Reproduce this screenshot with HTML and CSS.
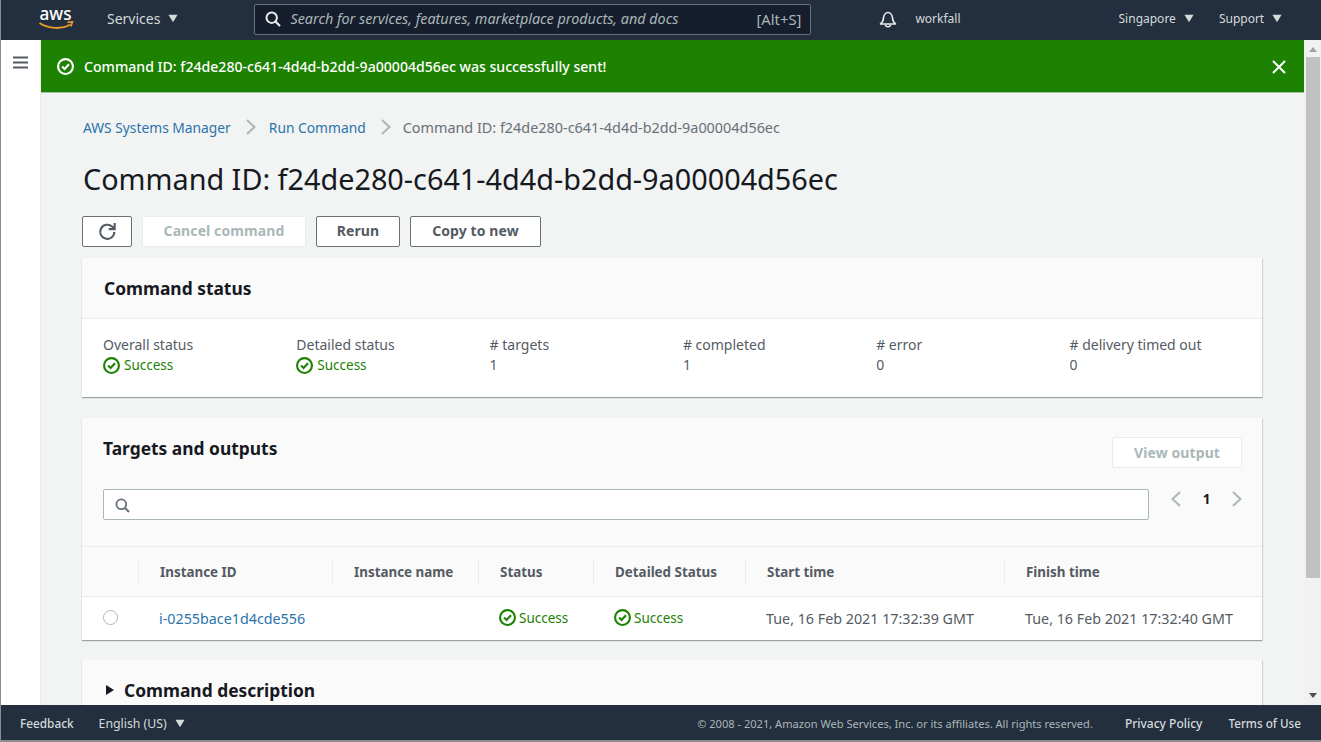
FILE: index.html
```html
<!DOCTYPE html>
<html lang="en">
<head>
<meta charset="utf-8">
<title>Command ID</title>
<link rel="stylesheet" href="styles.css">
</head>
<body>
<svg class="defs" width="0" height="0" aria-hidden="true">
  <defs>
    <symbol id="ok" viewBox="0 0 16 16"><circle cx="8" cy="8" r="7" fill="none" stroke="currentColor" stroke-width="2"/><path d="M4.8 8.1l2.3 2.3 4.2-4.6" fill="none" stroke="currentColor" stroke-width="2"/></symbol>
    <symbol id="caret" viewBox="0 0 12 10"><path d="M0.5 0.5h11L6 9.500z" fill="currentColor"/></symbol>
  </defs>
</svg>
<header class="top">
  <svg class="logo" viewBox="0 -9 37 37" width="37" height="37"><path d="M1.500 14c9 6 22 6.500 31 1.500" fill="none" stroke="#ec9b29" stroke-width="2"/><path d="M29.500 13.300l5-.4-1.600 4.600" fill="none" stroke="#ec9b29" stroke-width="1.600"/><text x="1.500" y="11" class="logo-text" textLength="32" lengthAdjust="spacingAndGlyphs">aws</text></svg>
  <span class="nav services">Services <svg class="caret"><use href="#caret"/></svg></span>
  <div class="search">
    <svg class="search-ico" viewBox="0 0 16 16" width="16" height="16"><circle cx="6.700" cy="6.700" r="5.200" fill="none" stroke="currentColor" stroke-width="2"/><path d="M10.500 10.500l4.500 4.500" stroke="currentColor" stroke-width="2.200"/></svg>
    <span class="search-ph">Search for services, features, marketplace products, and docs</span>
    <span class="search-key">[Alt+S]</span>
  </div>
  <svg class="bell" viewBox="0 0 18 18" width="18" height="18"><path d="M1.500 14h15c-2-1.500-2.800-3-3-6-.2-3-2-5.500-4.500-5.500S4.700 5 4.500 8c-.2 3-1 4.500-3 6z" fill="none" stroke="currentColor" stroke-width="1.600" stroke-linejoin="round"/><path d="M6.500 14.500c0 3 5 3 5 0" fill="none" stroke="currentColor" stroke-width="1.500"/></svg>
  <span class="nav user">workfall</span>
  <span class="nav region">Singapore <svg class="caret"><use href="#caret"/></svg></span>
  <span class="nav support">Support <svg class="caret"><use href="#caret"/></svg></span>
</header>
<div class="middle">
  <aside class="side">
    <svg viewBox="0 0 15 13" width="15" height="13"><path d="M0 1.500h15M0 6.500h15M0 11.500h15" stroke="#545b64" stroke-width="2"/></svg>
  </aside>
  <div class="content">
    <div class="flash">
      <svg class="flash-ok"><use href="#ok"/></svg>
      <span class="flash-text">Command ID: f24de280-c641-4d4d-b2dd-9a00004d56ec was successfully sent!</span>
      <svg class="flash-x" viewBox="0 0 14 14" width="14" height="14"><path d="M1 1l12 12M13 1L1 13" stroke="#fff" stroke-width="2"/></svg>
    </div>
    <main class="main">
      <nav class="crumbs">
        <a class="link">AWS Systems Manager</a>
        <svg class="chev" viewBox="0 0 10 16" width="10" height="16"><path d="M1 1l7.500 7L1 15" fill="none" stroke="#aab7b8" stroke-width="2"/></svg>
        <a class="link">Run Command</a>
        <svg class="chev chev-last" viewBox="0 0 10 16" width="10" height="16"><path d="M1 1l7.500 7L1 15" fill="none" stroke="#aab7b8" stroke-width="2"/></svg>
        <span class="crumb-cur">Command ID: f24de280-c641-4d4d-b2dd-9a00004d56ec</span>
      </nav>
      <h1 class="title">Command ID: f24de280-c641-4d4d-b2dd-9a00004d56ec</h1>
      <div class="actions">
        <button class="btn btn-ico"><svg viewBox="0 0 18 18" width="19" height="19"><path d="M15.500 9.500a6.700 6.700 0 1 1-2.200-5.200L15.500 6.300" fill="none" stroke="#545b64" stroke-width="2"/><path d="M15.800 1v5.800h-5.600" fill="none" stroke="#545b64" stroke-width="2"/></svg></button>
        <button class="btn btn-off btn-cancel">Cancel command</button>
        <button class="btn btn-rerun">Rerun</button>
        <button class="btn btn-copy">Copy to new</button>
      </div>
      <section class="card status-card">
        <div class="card-head"><h2>Command status</h2></div>
        <div class="stats">
          <div><div class="stat-k">Overall status</div><div class="ok"><svg class="ok-ico"><use href="#ok"/></svg>Success</div></div>
          <div><div class="stat-k">Detailed status</div><div class="ok"><svg class="ok-ico"><use href="#ok"/></svg>Success</div></div>
          <div><div class="stat-k"># targets</div><div class="stat-v">1</div></div>
          <div><div class="stat-k"># completed</div><div class="stat-v">1</div></div>
          <div><div class="stat-k"># error</div><div class="stat-v">0</div></div>
          <div><div class="stat-k"># delivery timed out</div><div class="stat-v">0</div></div>
        </div>
      </section>
      <section class="card targets-card">
        <div class="targets-head">
          <div class="targets-top">
            <h2>Targets and outputs</h2>
            <button class="btn btn-off btn-view">View output</button>
          </div>
          <div class="filter">
            <div class="filter-box"><svg viewBox="0 0 16 16" width="15" height="15"><circle cx="6.700" cy="6.700" r="5.200" fill="none" stroke="#687078" stroke-width="2"/><path d="M10.500 10.500l4.500 4.500" stroke="#687078" stroke-width="2.200"/></svg></div>
            <div class="pager">
              <svg viewBox="0 0 10 16" width="10" height="16"><path d="M9 1L1.500 8 9 15" fill="none" stroke="#aab7b8" stroke-width="2"/></svg>
              <span class="page-no">1</span>
              <svg viewBox="0 0 10 16" width="10" height="16"><path d="M1 1l7.500 7L1 15" fill="none" stroke="#aab7b8" stroke-width="2"/></svg>
            </div>
          </div>
        </div>
        <div class="thead">
          <div class="th"></div>
          <div class="th">Instance ID</div>
          <div class="th">Instance name</div>
          <div class="th">Status</div>
          <div class="th">Detailed Status</div>
          <div class="th">Start time</div>
          <div class="th">Finish time</div>
        </div>
        <div class="trow">
          <div class="td td-radio"><span class="radio"></span></div>
          <div class="td"><a class="link">i-0255bace1d4cde556</a></div>
          <div class="td"></div>
          <div class="td td-ok"><span class="ok"><svg class="ok-ico"><use href="#ok"/></svg>Success</span></div>
          <div class="td td-ok"><span class="ok"><svg class="ok-ico"><use href="#ok"/></svg>Success</span></div>
          <div class="td">Tue, 16 Feb 2021 17:32:39 GMT</div>
          <div class="td">Tue, 16 Feb 2021 17:32:40 GMT</div>
        </div>
      </section>
      <section class="card desc-card">
        <h2 class="desc-title"><svg class="desc-caret" viewBox="0 0 10 12" width="10" height="12"><path d="M1 1l8 5-8 5z" fill="#16191f"/></svg>Command description</h2>
      </section>
    </main>
  </div>
  <div class="scrollbar">
    <svg class="sb-arrow" viewBox="0 0 8 5" width="8" height="5"><path d="M0 5l4-5 4 5z" fill="#a3a3a3"/></svg>
    <div class="sb-track"><div class="sb-thumb"></div></div>
    <svg class="sb-arrow" viewBox="0 0 8 5" width="8" height="5"><path d="M0 0l4 5 4-5z" fill="#505050"/></svg>
  </div>
</div>
<footer class="foot">
  <span class="foot-a">Feedback</span>
  <span class="foot-lang">English (US) <svg class="caret"><use href="#caret"/></svg></span>
  <span class="foot-copy">© 2008 - 2021, Amazon Web Services, Inc. or its affiliates. All rights reserved.</span>
  <span class="foot-a foot-pp">Privacy Policy</span>
  <span class="foot-a foot-tu">Terms of Use</span>
</footer>
</body>
</html>
```
FILE: styles.css
```css
* { box-sizing: border-box; }
html, body { margin: 0; height: 100%; overflow: hidden; }
body {
  width: 1321px; height: 742px;
  display: flex; flex-direction: column;
  font-family: "Noto Sans", "Open Sans", sans-serif;
  font-size: 14px; color: #16191f;
  background: #fff;
  border-left: 1px solid #8d8d8d;
  border-bottom: 2px solid #8d8d8d;
}
.defs { position: absolute; }
h1, h2 { margin: 0; }

.top {
  height: 40px; flex: none; margin-left: -1px;
  background: #232f3e; color: #d5dbdb;
  display: flex; align-items: center;
  border-left: 1px solid #8d8d8d;
  padding-bottom: 3px;
  font-size: 13px;
}
.logo { margin-left: 37px; flex: none; }
.logo-text { font: 500 18.500px "Noto Sans", sans-serif; fill: #fff; }
.nav { display: inline-flex; align-items: center; gap: 8px; white-space: nowrap; }
.caret { width: 10px; height: 9px; }
.services { margin-left: 32px; font-size: 14px; }
.search {
  margin: 2px 0 0 76px; width: 557px; height: 31px;
  background: #161e2d; border: 1px solid #687078; border-radius: 2px;
  display: flex; align-items: center; padding: 0 9px 2px 10px;
}
.search-ico { color: #eaeded; flex: none; }
.search-ph { margin-left: 9px; font-style: italic; color: #aab7b8; font-size: 14.350px; flex: 1; white-space: nowrap; }
.search-key { color: #aab7b8; font-size: 14.800px; }
.bell { margin-left: 68px; color: #eaeded; flex: none; }
.user { margin-left: 18px; font-size: 12px; }
.region { margin-left: 158px; font-size: 12px; }
.support { margin-left: 25px; font-size: 12px; }

.middle { flex: 1; min-height: 0; display: flex; }
.side { width: 40px; flex: none; padding: 14px 0 0 12px; border-right: 1px solid #eaeded; background: #fff; }
.content { flex: 1; min-width: 0; display: flex; flex-direction: column; background: #f2f3f3; border-top: 1px solid #1d8102; }

.flash {
  height: 52px; flex: none; background: #1d8102; color: #fff;
  display: flex; align-items: center; padding: 0 18px 0 16px;
  border-bottom: 1px solid #a9c2a3;
  font-size: 14.100px; font-weight: 500;
}
.flash-ok { width: 17px; height: 17px; flex: none; }
.flash-text { margin-left: 10px; flex: 1; }
.flash-x { flex: none; }

.main { flex: 1; min-height: 0; overflow: hidden; padding: 0 42px 0 41px; }
.link { color: #2a73ab; }
.crumbs { display: flex; align-items: center; height: 20px; margin: 24px 0 0 1px; font-size: 13.800px; white-space: nowrap; }
.chev { margin: 0 13px 0 15px; flex: none; }
.chev-last { margin-right: 12px; }
.crumb-cur { color: #687078; font-size: 14.400px; }
.title { font-size: 28.800px; font-weight: 400; line-height: 40px; margin: 22px 0 0 1px; white-space: nowrap; }

.actions { display: flex; gap: 10px; margin-top: 17px; }
.btn {
  height: 31px; padding: 0 0 2px; font: 700 14px "Noto Sans", sans-serif; letter-spacing: .1px;
  background: #fff; color: #545b64; border: 1px solid #687078; border-radius: 2px;
  display: flex; align-items: center; justify-content: center;
}
.btn-off { color: #aab7b8; border-color: #eaeded; }
.btn-ico { width: 50px; padding: 0 0 1px; }
.btn-cancel { width: 164px; }
.btn-rerun { width: 84px; }
.btn-copy { width: 131px; }

.card { background: #fff; box-shadow: 0 1px 1px 0 rgba(0,28,36,.3), 1px 1px 1px 0 rgba(0,28,36,.1); }
.card h2 { font-size: 17.400px; font-weight: 700; line-height: 24px; }
.status-card { margin-top: 11px; height: 139px; }
.card-head { height: 61px; background: #fafafa; border-bottom: 1px solid #eaeded; padding: 18px 22px 0; }
.stats { display: grid; grid-template-columns: repeat(6, 193.300px); padding: 15px 21px 0; font-size: 14px; line-height: 21px; }
.stat-k { color: #545b64; }
.stat-v { color: #545b64; margin-top: -1px; }
.ok { color: #1d8102; display: inline-flex; align-items: center; gap: 4px; font-size: 13.500px; }
.td .ok { gap: 3px; }
.ok-ico { width: 17px; height: 17px; flex: none; }

.targets-card { margin-top: 21px; height: 222px; }
.targets-head { height: 129px; background: #fafafa; border-bottom: 1px solid #eaeded; padding: 19px 20px 0 21px; }
.targets-top { display: flex; align-items: flex-start; justify-content: space-between; height: 52px; }
.targets-top h2 { margin-top: -1px; }
.btn-view { width: 130px; padding: 0; }
.filter { display: flex; align-items: flex-start; }
.filter-box { width: 1046px; height: 31px; background: #fff; border: 1px solid #aab7b8; border-radius: 2px; padding: 8px 0 0 11px; flex: none; }
.filter-box svg { display: block; }
.pager { display: flex; align-items: center; margin-left: 22px; height: 20px; }
.page-no { font-size: 13.500px; font-weight: 700; width: 51px; text-align: center; }

.thead, .trow { display: grid; grid-template-columns: 56px 194px 146px 115px 152px 259px 258px; }
.thead { height: 50px; background: #fafafa; align-items: center; border-bottom: 1px solid #eaeded; }
.th { color: #545b64; font-weight: 700; font-size: 13.400px; padding-left: 21px; height: 26px; line-height: 26px; border-left: 1px solid #eaeded; white-space: nowrap; }
.th:first-child { border-left: 0; }
.trow { height: 43px; align-items: center; background: #fff; }
.td { padding-left: 21px; color: #545b64; font-size: 14.300px; white-space: nowrap; }
.td-ok { padding-top: 2px; }
.td-radio { padding: 0 0 3px 21px; display: flex; }
.radio { width: 15px; height: 15px; border: 1px solid #aab7b8; border-radius: 50%; background: #fff; }

.desc-card { margin-top: 20px; height: 80px; background: #fafafa; }
.card .desc-title { display: flex; align-items: center; gap: 9px; padding: 18px 0 0 23px; }
.desc-caret { flex: none; }

.scrollbar { width: 17px; flex: none; background: #f1f1f1; display: flex; flex-direction: column; align-items: center; padding: 7px 0 7px; }
.sb-arrow { flex: none; }
.sb-track { flex: 1; width: 100%; padding: 5px 1px 0 2px; }
.sb-thumb { height: 521px; background: #c1c1c1; }

.foot {
  height: 35px; flex: none; margin-left: -1px; padding-top: 1px;
  background: #232f3e; color: #d5dbdb;
  display: flex; align-items: center; font-size: 11.800px; white-space: nowrap;
}
.foot-a { font-weight: 500; }
.foot-a:first-child { margin-left: 20px; }
.foot-lang { margin-left: 25px; font-size: 12.300px; display: inline-flex; align-items: center; gap: 8px; }
.foot-copy { margin-left: auto; font-size: 11.080px; color: #aab7b8; }
.foot-pp { margin-left: 32px; font-size: 12px; }
.foot-tu { margin: 0 20px 0 26px; font-size: 11.700px; }
```
